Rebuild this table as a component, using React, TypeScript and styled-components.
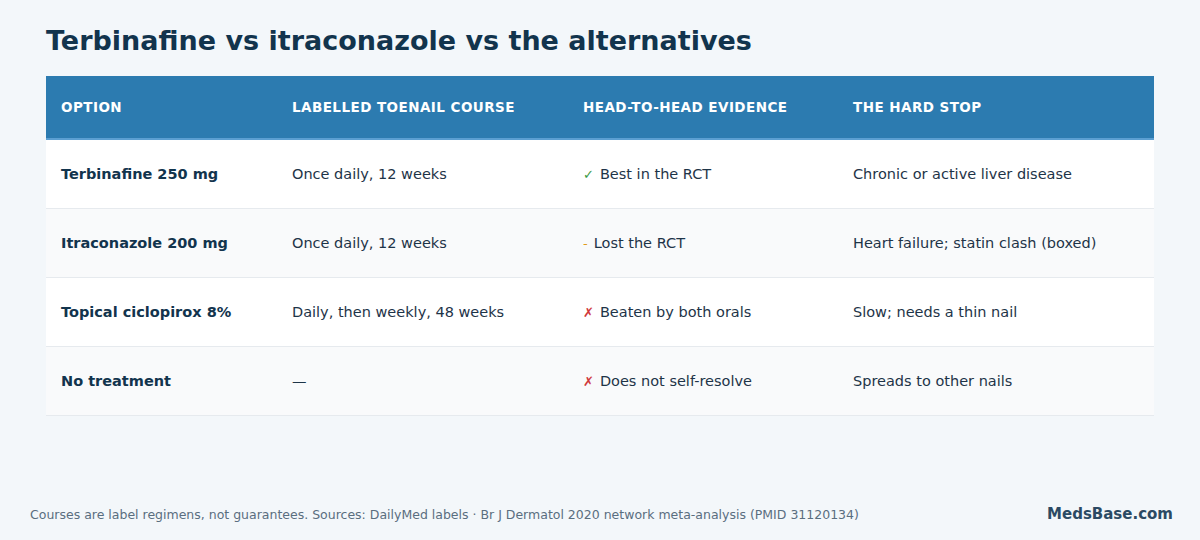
import React from "react";
import styled, { createGlobalStyle } from "styled-components";

const Global = createGlobalStyle`
  html, body { margin: 0; padding: 0; background: #f3f7fa; }
  body { font-family: "DejaVu Sans", Verdana, sans-serif; }
`;

const Page = styled.div`
  width: 1200px;
  height: 540px;
  box-sizing: border-box;
  display: flex;
  flex-direction: column;
  background: #f3f7fa;
`;

const Main = styled.div`
  padding: 24px 46px 0 46px;
  flex: 1;
`;

const Title = styled.h1`
  margin: 0 0 18px 0;
  font-size: 27px;
  line-height: 34px;
  font-weight: 700;
  color: #12344d;
`;

const Table = styled.div`
  width: 1108px;
`;

const cols = "231px 291px 270px 1fr";

const HeadRow = styled.div`
  display: grid;
  grid-template-columns: ${cols};
  background: #2c7bb0;
  border-bottom: 2px solid #5b9fd2;
  height: 64px;
  box-sizing: border-box;
  align-items: center;
`;

const HeadCell = styled.div`
  padding: 0 15px;
  color: #ffffff;
  font-size: 13.5px;
  font-weight: 700;
  letter-spacing: 0.45px;
  text-transform: uppercase;
`;

const Row = styled.div<{ $alt: boolean }>`
  display: grid;
  grid-template-columns: ${cols};
  align-items: center;
  height: 69px;
  box-sizing: border-box;
  background: ${(p) => (p.$alt ? "#f9fafb" : "#ffffff")};
  border-bottom: 1px solid #e6eaee;
`;

const Cell = styled.div<{ $strong?: boolean }>`
  padding: 0 15px;
  font-size: 14.5px;
  color: ${(p) => (p.$strong ? "#12344d" : "#1e3448")};
  font-weight: ${(p) => (p.$strong ? 700 : 400)};
  white-space: nowrap;
`;

const Mark = styled.span<{ $color: string }>`
  color: ${(p) => p.$color};
  margin-right: 6px;
  font-size: 13px;
`;

const Footer = styled.div`
  display: flex;
  justify-content: space-between;
  align-items: center;
  padding: 0 27px 17px 30px;
`;

const Note = styled.div`
  font-size: 12.5px;
  color: #5a6e7f;
`;

const Brand = styled.div`
  font-size: 15px;
  font-weight: 700;
  color: #2b4a63;
`;

type Ev = { kind: "good" | "mid" | "bad"; text: string };
const rows: { name: string; course: string; ev: Ev; stop: string }[] = [
  { name: "Terbinafine 250 mg", course: "Once daily, 12 weeks", ev: { kind: "good", text: "Best in the RCT" }, stop: "Chronic or active liver disease" },
  { name: "Itraconazole 200 mg", course: "Once daily, 12 weeks", ev: { kind: "mid", text: "Lost the RCT" }, stop: "Heart failure; statin clash (boxed)" },
  { name: "Topical ciclopirox 8%", course: "Daily, then weekly, 48 weeks", ev: { kind: "bad", text: "Beaten by both orals" }, stop: "Slow; needs a thin nail" },
  { name: "No treatment", course: "—", ev: { kind: "bad", text: "Does not self-resolve" }, stop: "Spreads to other nails" },
];

const markFor = (k: Ev["kind"]) =>
  k === "good" ? { g: "✓", c: "#3a9a45" } : k === "mid" ? { g: "-", c: "#e09a1a" } : { g: "✗", c: "#d0393b" };

export default function App() {
  return (
    <Page>
      <Global />
      <Main>
        <Title>Terbinafine vs itraconazole vs the alternatives</Title>
        <Table>
          <HeadRow>
            <HeadCell>Option</HeadCell>
            <HeadCell>Labelled toenail course</HeadCell>
            <HeadCell>Head-to-head evidence</HeadCell>
            <HeadCell>The hard stop</HeadCell>
          </HeadRow>
          {rows.map((r, i) => {
            const m = markFor(r.ev.kind);
            return (
              <Row key={r.name} $alt={i % 2 === 1}>
                <Cell $strong>{r.name}</Cell>
                <Cell>{r.course}</Cell>
                <Cell>
                  <Mark $color={m.c}>{m.g}</Mark>
                  {r.ev.text}
                </Cell>
                <Cell>{r.stop}</Cell>
              </Row>
            );
          })}
        </Table>
      </Main>
      <Footer>
        <Note>
          Courses are label regimens, not guarantees. Sources: DailyMed labels · Br J Dermatol 2020 network meta-analysis (PMID 31120134)
        </Note>
        <Brand>MedsBase.com</Brand>
      </Footer>
    </Page>
  );
}
